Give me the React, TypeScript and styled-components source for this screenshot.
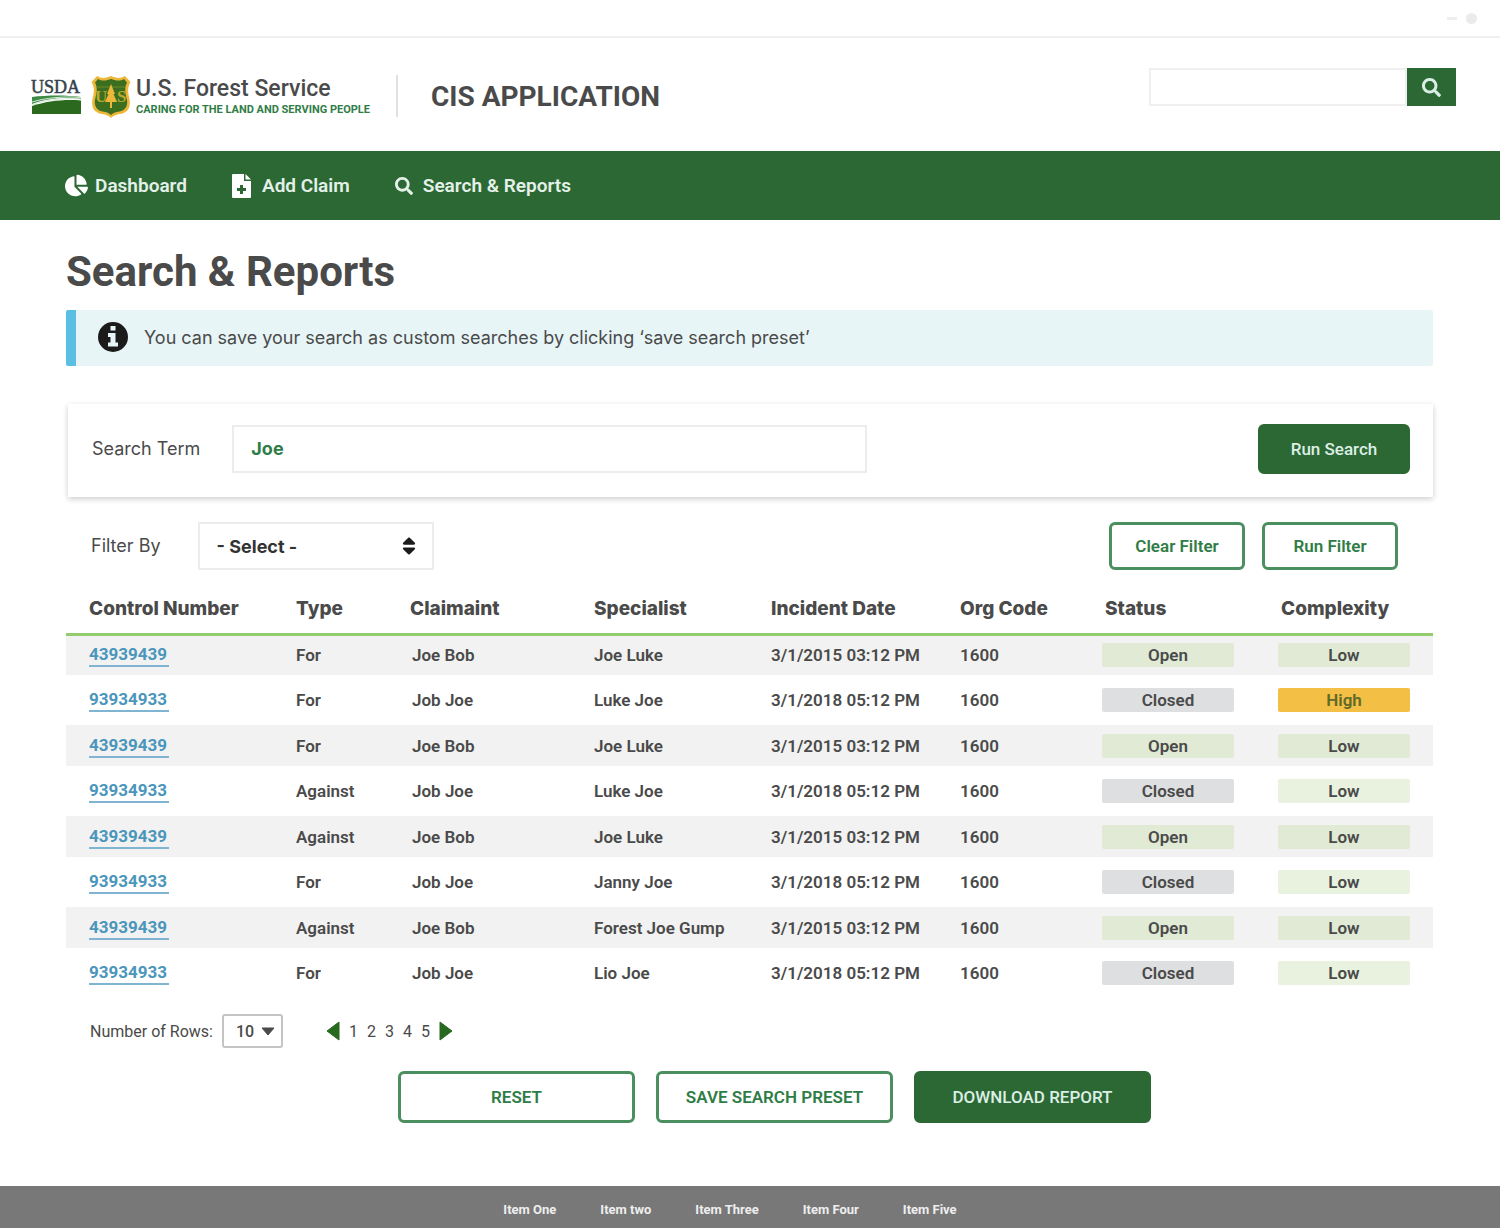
import React from "react";
import styled, { createGlobalStyle, css } from "styled-components";
import { FaChartPie, FaSearch, FaSort } from "react-icons/fa";

const green = "#2c6834";
const outlineGreen = "#2f7d46";
const ink = "#4a4a4a";
const roboto = `Roboto, "Liberation Sans", sans-serif`;
const inter = `Inter, "Open Sans", sans-serif`;

const GlobalStyle = createGlobalStyle`
  * { box-sizing: border-box; }
  body { margin: 0; background: #fff; color: ${ink}; font-family: ${roboto}; }
  button, input, select { font: inherit; color: inherit; }
`;

const Page = styled.div`
  display: flex;
  flex-direction: column;
  min-height: 100vh;
`;

const WindowBar = styled.div`
  display: flex;
  align-items: center;
  justify-content: flex-end;
  gap: 9px;
  height: 38px;
  padding-right: 23px;
  border-bottom: 2px solid #efefef;
`;

const Dash = styled.span`
  width: 10px;
  height: 3px;
  background: #efefed;
`;

const Dot = styled.span`
  width: 11px;
  height: 11px;
  border-radius: 50%;
  background: #ebebe9;
`;

const Header = styled.header`
  display: flex;
  align-items: flex-start;
  justify-content: space-between;
  height: 113px;
  padding: 30px 44px 0 31px;
`;

const Brand = styled.div`
  display: flex;
  align-items: flex-start;
  padding-top: 7px;
`;

const ShieldSlot = styled.div`
  display: flex;
  margin: 0 5px 0 10px;
`;

const Agency = styled.div`
  display: flex;
  flex-direction: column;
  padding-right: 26px;
  border-right: 2px solid #dfe1e2;
  height: 42px;
`;

const AgencyName = styled.span`
  font-size: 23px;
  line-height: 28px;
  font-weight: 500;
`;

const Motto = styled.span`
  font-size: 11px;
  line-height: 14px;
  font-weight: 700;
  color: ${outlineGreen};
`;

const AppName = styled.span`
  padding-left: 33px;
  font-size: 28px;
  line-height: 44px;
  font-weight: 700;
`;

const SiteSearch = styled.form`
  display: flex;
  width: 307px;
  height: 38px;
`;

const SiteSearchInput = styled.input`
  flex: 1;
  min-width: 0;
  padding: 0 12px;
  border: 2px solid #efefef;
  background: #fff;
`;

const SiteSearchButton = styled.button`
  display: flex;
  align-items: center;
  justify-content: center;
  width: 49px;
  border: 0;
  background: ${green};
  color: #dcefe6;
  font-size: 19px;
`;

const Nav = styled.nav`
  display: flex;
  align-items: center;
  gap: 45px;
  height: 69px;
  padding: 0 65px;
  background: ${green};
`;

const NavLink = styled.a<{ $gap: number }>`
  display: flex;
  align-items: center;
  gap: ${(p) => p.$gap}px;
  color: #e3f1e9;
  font-size: 19px;
  line-height: 24px;
  font-weight: 600;
  text-decoration: none;
`;

const Main = styled.main`
  flex: 1;
  padding: 27px 67px 0 66px;
`;

const Title = styled.h1`
  margin: 0;
  font-size: 42px;
  line-height: 50px;
  font-weight: 700;
`;

const Notice = styled.div`
  display: flex;
  align-items: center;
  gap: 16px;
  height: 56px;
  margin-top: 13px;
  padding: 0 0 2px 22px;
  border-left: 10px solid #5bbfe3;
  border-radius: 2px;
  background: #e7f5f7;
  font-family: ${inter};
  font-size: 18px;
`;

const SearchCard = styled.form`
  display: flex;
  align-items: center;
  margin: 38px 0 0 2px;
  height: 93px;
  padding: 0 23px 4px 24px;
  background: #fff;
  box-shadow: 0 2px 6px rgba(0, 0, 0, 0.2);
`;

const FieldLabel = styled.label`
  font-family: ${inter};
  font-size: 18px;
  line-height: 24px;
`;

const TermInput = styled.input`
  width: 635px;
  height: 48px;
  margin: 0 auto 0 32px;
  padding: 0 17px;
  border: 2px solid #ececec;
  font-family: ${inter};
  font-size: 18px;
  font-weight: 700;
  color: ${outlineGreen};
`;

const FilterRow = styled.form`
  display: flex;
  align-items: center;
  gap: 17px;
  margin-top: 25px;
  padding: 0 35px 0 25px;
`;

const SelectBox = styled.div<{ $kind: "filter" | "rows" }>`
  display: grid;
  align-items: center;
  ${(p) =>
    p.$kind === "filter"
      ? css`width: 236px; height: 48px; margin: 0 auto 0 20px; font-family: ${inter};`
      : css`width: 61px; height: 34px; margin-left: 9px;`}
  > * { grid-area: 1 / 1; }
  > svg { justify-self: end; margin-right: ${(p) => (p.$kind === "filter" ? 14 : 8)}px; pointer-events: none; }
`;

const Select = styled.select<{ $kind: "filter" | "rows" }>`
  appearance: none;
  width: 100%;
  height: 100%;
  background: #fff;
  ${(p) =>
    p.$kind === "filter"
      ? css`padding: 0 17px; border: 2px solid #ececec; font-size: 18px; font-weight: 700; color: #333;`
      : css`padding: 0 12px; border: 2px solid #c4c4c4; border-radius: 3px; font-size: 16px; font-weight: 500;`}
`;

const Button = styled.button<{ $solid?: boolean; $width: number; $height: number }>`
  width: ${(p) => p.$width}px;
  height: ${(p) => p.$height}px;
  padding: 0;
  border: 3px solid ${(p) => (p.$solid ? green : "#4b8f61")};
  border-radius: 6px;
  background: ${(p) => (p.$solid ? green : "#fff")};
  color: ${(p) => (p.$solid ? "#dcefe6" : outlineGreen)};
  font-size: 17px;
  font-weight: ${(p) => (p.$solid ? 500 : 600)};
`;

const Results = styled.table`
  width: 100%;
  margin-top: 16px;
  border-collapse: collapse;
  table-layout: fixed;
`;

const HeadCell = styled.th<{ $inset?: number }>`
  height: 48px;
  padding: 0 0 0 ${(p) => p.$inset ?? 0}px;
  border-bottom: 3px solid #93cc6c;
  text-align: left;
  font-family: ${inter};
  font-size: 19px;
  line-height: 24px;
  font-weight: 800;
`;

const Row = styled.tr`
  height: 50px;
  &:nth-child(odd) {
    height: 41px;
    background: #f2f2f2;
  }
`;

const Cell = styled.td<{ $inset?: number }>`
  padding: 0 0 0 ${(p) => p.$inset ?? 0}px;
  font-size: 17px;
  line-height: 22px;
  font-weight: 600;
`;

const ClaimLink = styled.a`
  display: inline-block;
  padding-right: 2px;
  border-bottom: 2px solid #7fb5d0;
  color: #4b96bb;
  font-weight: 700;
  text-decoration: none;
`;

type Tone = "open" | "closed" | "low" | "high";
const tones: Record<Tone, string> = {
  open: "#e0ead5",
  closed: "#dedfe1",
  low: "#e9f2df",
  high: "#f4bf45",
};

const Badge = styled.span<{ $tone: Tone }>`
  display: block;
  width: 132px;
  height: 24px;
  line-height: 24px;
  border-radius: 2px;
  background: ${(p) => tones[p.$tone]};
  color: ${(p) => (p.$tone === "high" ? "#5f6a2a" : ink)};
  text-align: center;
`;

const Pager = styled.div`
  display: flex;
  align-items: center;
  margin-top: 16px;
  padding-left: 24px;
  font-size: 16px;
`;

const Pages = styled.nav`
  display: flex;
  align-items: center;
  gap: 9px;
  margin-left: 43px;
`;

const PageLink = styled.a`
  color: ${ink};
  text-decoration: none;
`;

const Arrow = styled.button`
  display: flex;
  padding: 0;
  border: 0;
  background: none;
`;

const Actions = styled.div`
  display: flex;
  justify-content: center;
  gap: 21px;
  margin-top: 23px;
  padding-left: 50px;
`;

const Footer = styled.footer`
  display: flex;
  justify-content: center;
  gap: 44px;
  padding: 15px 40px 9px 0;
  background: #787878;
`;

const FooterLink = styled.a`
  color: #eee;
  font-size: 13px;
  line-height: 18px;
  font-weight: 700;
  text-decoration: none;
`;

const UsdaLogo = () => (
  <svg width="50" height="42" viewBox="0 0 50 42" role="img" aria-label="USDA">
    <text x="0" y="18" fontFamily="Liberation Serif, serif" fontSize="18" fill="#33424c" stroke="#33424c" strokeWidth=".5">USDA</text>
    <path d="M1 22C16 20 36 20 50 22V24C34 22 16 23 1 29Z" fill="#3d8a45" />
    <path d="M1 27C14 23 32 21 50 22.500M1 30C16 24 34 23 50 24" stroke="#d8ecd8" fill="none" />
    <path d="M1 39V31C16 26 34 24 50 25.500V39Z" fill="#2b6a1e" />
  </svg>
);

const ShieldLogo = () => (
  <svg width="40" height="44" viewBox="0 0 40 44" role="img" aria-label="Forest Service shield">
    <path d="M6 1C11 4 15 3 20 1C25 3 29 4 34 1L39.500 7C36 13 37 18 38.500 24C40 32 37 38 29 39C25 39.500 22 41 20 43C18 41 15 39.500 11 39C3 38 0 32 1.500 24C3 18 4 13 .5 7Z" fill="#edb73a" />
    <path d="M7 4C11 6.500 16 5.500 20 4C24 5.500 29 6.500 33 4L36 7.500C33 13 34.500 19 36 25C37 31 34 35.500 28.500 36.500C24 37 22 38 20 40C18 38 16 37 11.500 36.500C6 35.500 3 31 4 25C5.500 19 7 13 4 7.500Z" fill="#3b6e1f" />
    <path d="M6 12H34" stroke="#6f8a26" />
    <g fontFamily="Liberation Serif, serif" fontWeight="700" fontSize="17" fill="#b9a830">
      <text x="4" y="27">U</text>
      <text x="26" y="27">S</text>
    </g>
    <path d="M20 9L16 19H17.500L14 27H19V33H21V27H26L22.500 19H24Z" fill="#edb73a" />
  </svg>
);

const FileAddIcon = () => (
  <svg width="19" height="24" viewBox="0 0 19 24" aria-hidden="true">
    <path d="M1 0H12V7H19V23Q19 24 18 24H1Q0 24 0 23V1Q0 0 1 0ZM8 11V14H5V17H8V20H11V17H14V14H11V11Z" fill="#fff" fillRule="evenodd" />
    <path d="M13.500 0L19 5.500H13.500Z" fill="#fff" />
  </svg>
);

const InfoIcon = () => (
  <svg width="30" height="30" viewBox="0 0 30 30" aria-hidden="true">
    <circle cx="15" cy="15" r="15" fill="#1b1b1b" />
    <path d="M12.500 4H17.500V8.500H12.500ZM10 11H17.500V20.500H20V24.500H10V20.500H12.500V15H10Z" fill="#e7f5f7" />
  </svg>
);

const Triangle = ({ d, w, h, fill }: { d: string; w: number; h: number; fill: string }) => (
  <svg width={w} height={h} viewBox={`0 0 ${w} ${h}`} aria-hidden="true">
    <path d={d} fill={fill} stroke={fill} strokeLinejoin="round" />
  </svg>
);

const columns = [
  { label: "Control Number", width: 230, inset: 23 },
  { label: "Type", width: 114 },
  { label: "Claimaint", width: 184 },
  { label: "Specialist", width: 177 },
  { label: "Incident Date", width: 189 },
  { label: "Org Code", width: 142 },
  { label: "Status", width: 176, inset: 3 },
  { label: "Complexity", width: 155, inset: 3 },
];

const people = [
  ["For", "Joe Luke"],
  ["For", "Luke Joe"],
  ["For", "Joe Luke"],
  ["Against", "Luke Joe"],
  ["Against", "Joe Luke"],
  ["For", "Janny Joe"],
  ["Against", "Forest Joe Gump"],
  ["For", "Lio Joe"],
];

const claims = people.map(([type, specialist], i) => {
  const open = i % 2 === 0;
  return {
    id: open ? "43939439" : "93934933",
    type,
    claimant: open ? "Joe Bob" : "Job Joe",
    specialist,
    date: open ? "3/1/2015 03:12 PM" : "3/1/2018 05:12 PM",
    org: "1600",
    open,
    high: i === 1,
  };
});

const stop = (e: React.FormEvent) => e.preventDefault();

export default function App() {
  return (
    <Page>
      <GlobalStyle />
      <WindowBar><Dash /><Dot /></WindowBar>
      <Header>
        <Brand>
          <UsdaLogo />
          <ShieldSlot><ShieldLogo /></ShieldSlot>
          <Agency>
            <AgencyName>U.S. Forest Service</AgencyName>
            <Motto>CARING FOR THE LAND AND SERVING PEOPLE</Motto>
          </Agency>
          <AppName>CIS APPLICATION</AppName>
        </Brand>
        <SiteSearch onSubmit={stop}>
          <SiteSearchInput type="text" aria-label="Search site" />
          <SiteSearchButton aria-label="Search"><FaSearch /></SiteSearchButton>
        </SiteSearch>
      </Header>
      <Nav>
        <NavLink href="#dashboard" $gap={7}><FaChartPie size={23} color="#fff" />Dashboard</NavLink>
        <NavLink href="#add" $gap={11}><FileAddIcon />Add Claim</NavLink>
        <NavLink href="#search" $gap={10}><FaSearch size={18} />Search &amp; Reports</NavLink>
      </Nav>
      <Main>
        <Title>Search &amp; Reports</Title>
        <Notice>
          <InfoIcon />
          You can save your search as custom searches by clicking ‘save search preset’
        </Notice>
        <SearchCard onSubmit={stop}>
          <FieldLabel htmlFor="term">Search Term</FieldLabel>
          <TermInput id="term" type="text" defaultValue="Joe" />
          <Button $solid $width={152} $height={50}>Run Search</Button>
        </SearchCard>
        <FilterRow onSubmit={stop}>
          <FieldLabel htmlFor="filter">Filter By</FieldLabel>
          <SelectBox $kind="filter">
            <Select id="filter" $kind="filter"><option>- Select -</option></Select>
            <FaSort size={22} color="#1b1b1b" />
          </SelectBox>
          <Button type="button" $width={136} $height={48}>Clear Filter</Button>
          <Button $width={136} $height={48}>Run Filter</Button>
        </FilterRow>
        <Results>
          <colgroup>
            {columns.map((c) => <col key={c.label} style={{ width: c.width }} />)}
          </colgroup>
          <thead>
            <tr>
              {columns.map((c) => <HeadCell key={c.label} scope="col" $inset={c.inset}>{c.label}</HeadCell>)}
            </tr>
          </thead>
          <tbody>
            {claims.map((c, i) => (
              <Row key={i}>
                <Cell $inset={23}><ClaimLink href={`#claim-${c.id}`}>{c.id}</ClaimLink></Cell>
                <Cell>{c.type}</Cell>
                <Cell $inset={2}>{c.claimant}</Cell>
                <Cell>{c.specialist}</Cell>
                <Cell>{c.date}</Cell>
                <Cell>{c.org}</Cell>
                <Cell><Badge $tone={c.open ? "open" : "closed"}>{c.open ? "Open" : "Closed"}</Badge></Cell>
                <Cell><Badge $tone={c.high ? "high" : c.open ? "open" : "low"}>{c.high ? "High" : "Low"}</Badge></Cell>
              </Row>
            ))}
          </tbody>
        </Results>
        <Pager>
          <label htmlFor="rows">Number of Rows:</label>
          <SelectBox $kind="rows">
            <Select id="rows" $kind="rows"><option>10</option></Select>
            <Triangle w={14} h={9} d="M1 1H13L7 8Z" fill={ink} />
          </SelectBox>
          <Pages aria-label="Result pages">
            <Arrow type="button" aria-label="Previous page"><Triangle w={14} h={20} d="M13 1V19L1 10Z" fill="#27691f" /></Arrow>
            {[1, 2, 3, 4, 5].map((n) => <PageLink key={n} href={`#page-${n}`}>{n}</PageLink>)}
            <Arrow type="button" aria-label="Next page"><Triangle w={14} h={20} d="M1 1V19L13 10Z" fill="#27691f" /></Arrow>
          </Pages>
        </Pager>
        <Actions>
          <Button type="button" $width={237} $height={52}>RESET</Button>
          <Button type="button" $width={237} $height={52}>SAVE SEARCH PRESET</Button>
          <Button type="button" $solid $width={237} $height={52}>DOWNLOAD REPORT</Button>
        </Actions>
      </Main>
      <Footer>
        {["Item One", "Item two", "Item Three", "Item Four", "Item Five"].map((t) => (
          <FooterLink key={t} href="#footer">{t}</FooterLink>
        ))}
      </Footer>
    </Page>
  );
}
